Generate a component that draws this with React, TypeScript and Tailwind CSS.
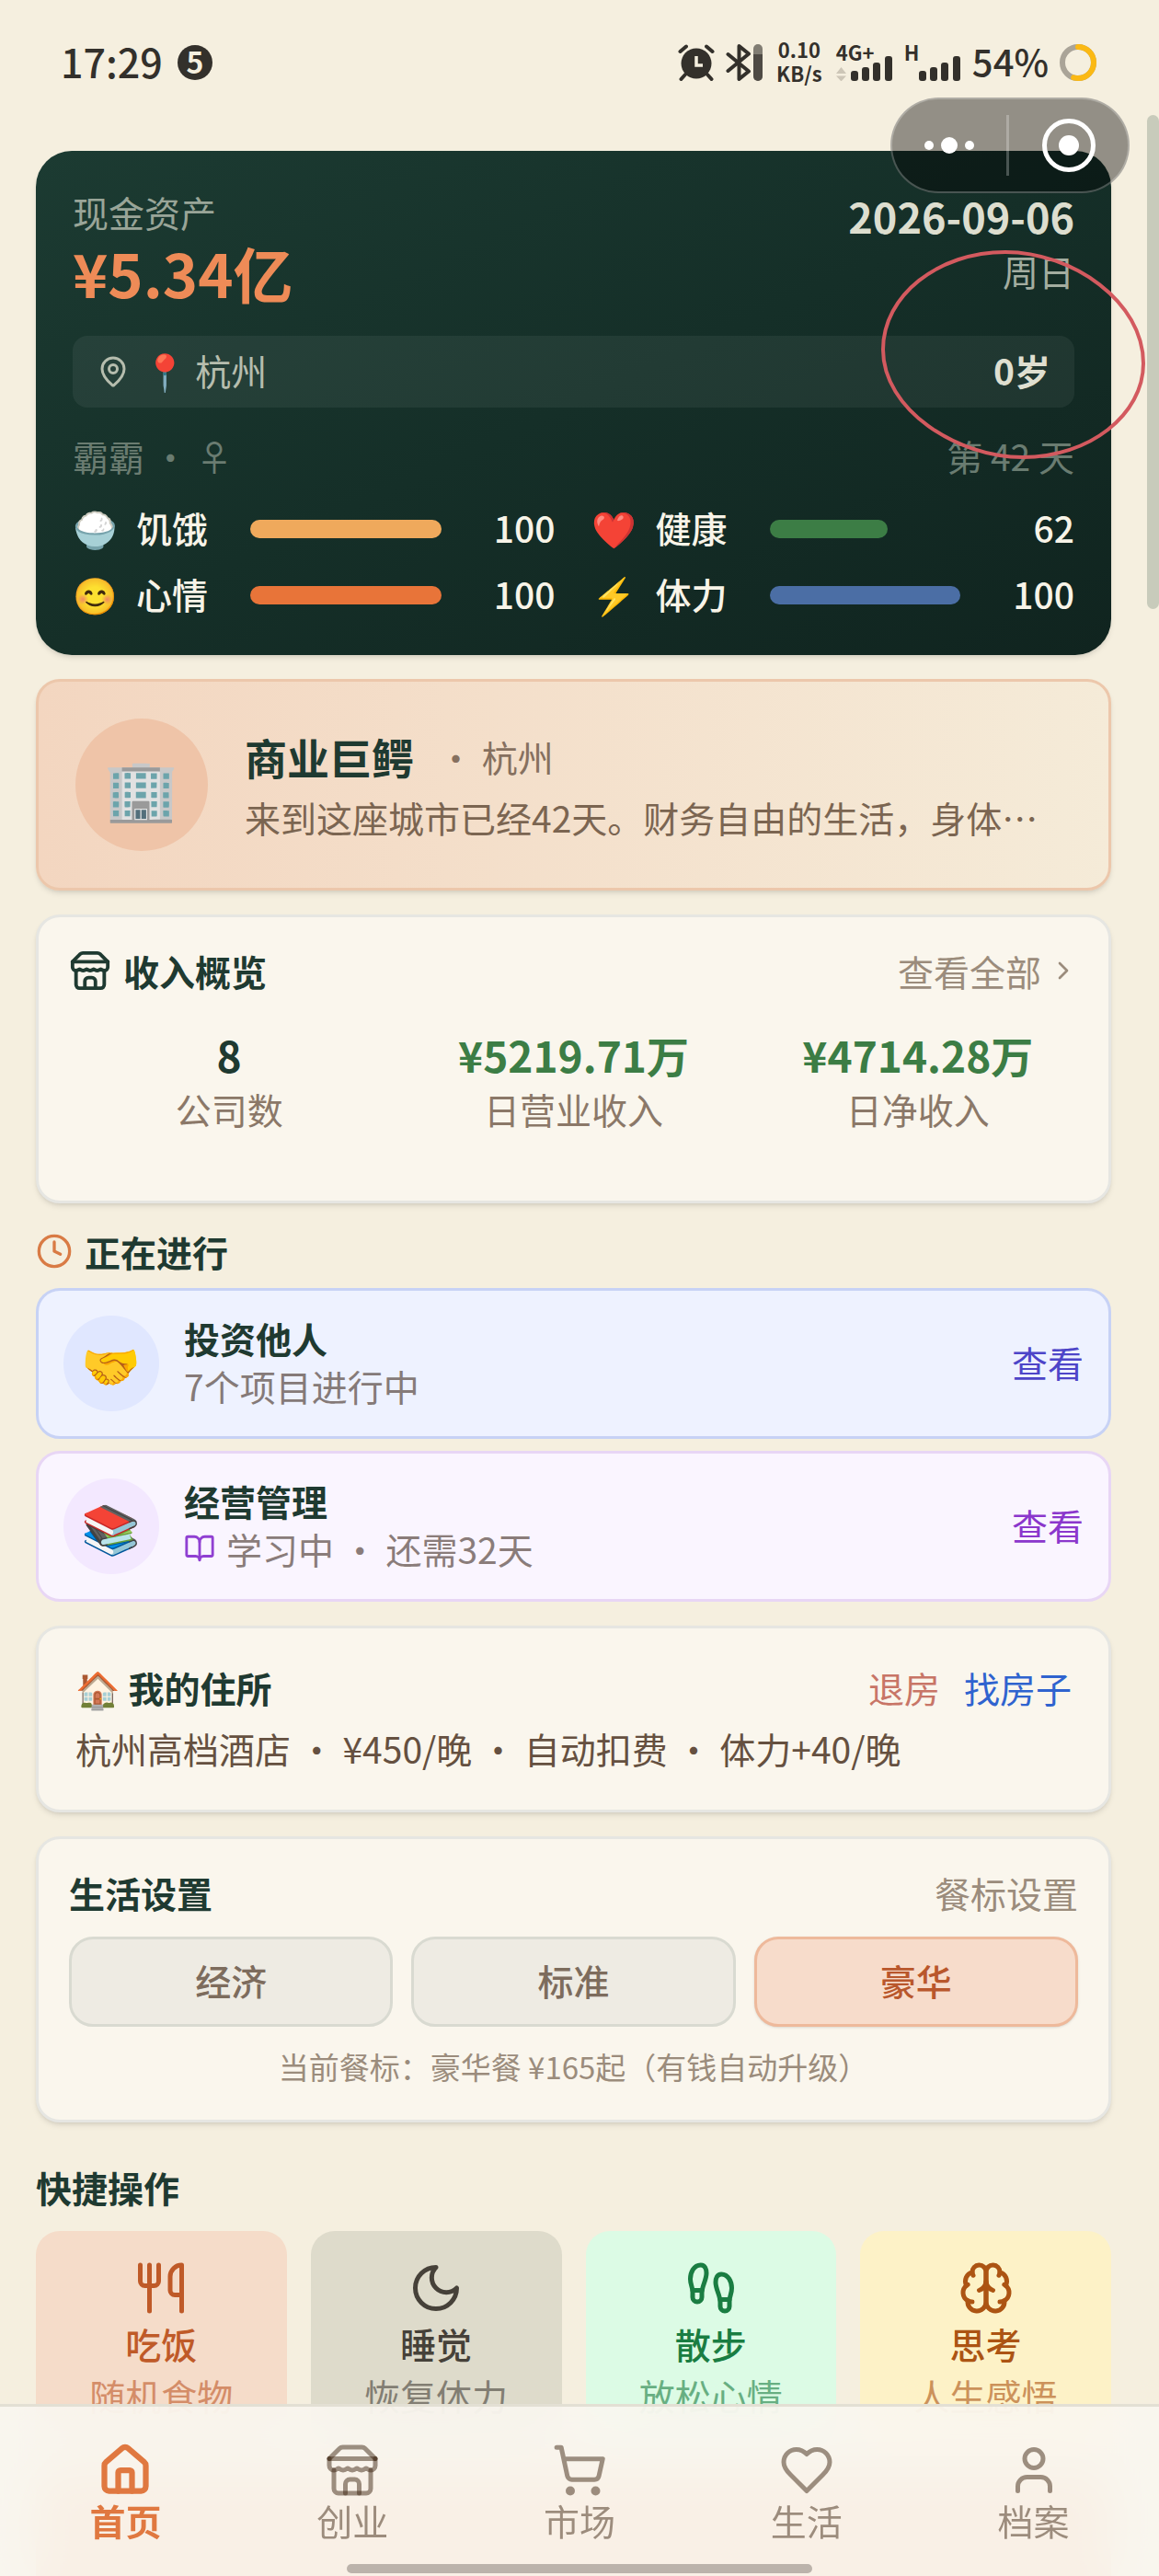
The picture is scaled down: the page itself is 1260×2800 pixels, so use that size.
import React from 'react';
import {
  BookOpen,
  ChevronRight,
  Clock,
  Footprints,
  House,
  MapPin,
  ShoppingCart,
  User,
  Utensils,
} from 'lucide-react';

type IconProps = { className?: string };

function StrokeIcon({ className, children }: IconProps & { children: React.ReactNode }) {
  return (
    <svg
      viewBox="0 0 24 24"
      fill="none"
      stroke="currentColor"
      strokeWidth="2"
      strokeLinecap="round"
      strokeLinejoin="round"
      aria-hidden="true"
      className={className}
    >
      {children}
    </svg>
  );
}

function StoreIcon({ className }: IconProps) {
  return (
    <StrokeIcon className={className}>
      <path d="m2 7 4.41-4.41A2 2 0 0 1 7.83 2h8.34a2 2 0 0 1 1.42.59L22 7" />
      <path d="M4 12v8a2 2 0 0 0 2 2h12a2 2 0 0 0 2-2v-8" />
      <path d="M15 22v-4a2 2 0 0 0-2-2h-2a2 2 0 0 0-2 2v4" />
      <path d="M2 7h20" />
      <path d="M22 7v3a2 2 0 0 1-2 2a2.7 2.7 0 0 1-1.59-.63.7.7 0 0 0-.82 0A2.7 2.7 0 0 1 16 12a2.7 2.7 0 0 1-1.59-.63.7.7 0 0 0-.82 0A2.7 2.7 0 0 1 12 12a2.7 2.7 0 0 1-1.59-.63.7.7 0 0 0-.82 0A2.7 2.7 0 0 1 8 12a2.7 2.7 0 0 1-1.59-.63.7.7 0 0 0-.82 0A2.7 2.7 0 0 1 4 12a2 2 0 0 1-2-2V7" />
    </StrokeIcon>
  );
}

function MoonIcon({ className }: IconProps) {
  return (
    <StrokeIcon className={className}>
      <path d="M12 3a6 6 0 0 0 9 9 9 9 0 1 1-9-9Z" />
    </StrokeIcon>
  );
}

function BrainIcon({ className }: IconProps) {
  return (
    <StrokeIcon className={className}>
      <path d="M12 5a3 3 0 1 0-5.997.125 4 4 0 0 0-2.526 5.77 4 4 0 0 0 .556 6.588A4 4 0 1 0 12 18Z" />
      <path d="M12 5a3 3 0 1 1 5.997.125 4 4 0 0 1 2.526 5.77 4 4 0 0 1-.556 6.588A4 4 0 1 1 12 18Z" />
      <path d="M15 13a4.5 4.5 0 0 1-3-4 4.5 4.5 0 0 1-3 4" />
      <path d="M17.599 6.5a3 3 0 0 0 .399-1.375" />
      <path d="M6.003 5.125A3 3 0 0 0 6.401 6.5" />
      <path d="M3.477 10.896a4 4 0 0 1 .585-.396" />
      <path d="M19.938 10.5a4 4 0 0 1 .585.396" />
      <path d="M6 18a4 4 0 0 1-1.967-.516" />
      <path d="M19.967 17.484A4 4 0 0 1 18 18" />
    </StrokeIcon>
  );
}

function HeartIcon({ className }: IconProps) {
  return (
    <StrokeIcon className={className}>
      <path d="M19 14c1.49-1.46 3-3.21 3-5.5A5.5 5.5 0 0 0 16.5 3c-1.76 0-3 .5-4.5 2-1.5-1.5-2.74-2-4.5-2A5.5 5.5 0 0 0 2 8.5c0 2.3 1.5 4.05 3 5.5l7 7Z" />
    </StrokeIcon>
  );
}

function AlarmIcon() {
  return (
    <svg viewBox="0 0 40 40" className="size-10" aria-hidden="true">
      <circle cx="20" cy="21" r="16.5" fill="currentColor" />
      <g stroke="currentColor" strokeWidth="4" strokeLinecap="round" fill="none">
        <path d="M2.5 8 9 2.5M37.5 8 31 2.5M8 33l-4.5 5M32 33l4.5 5" />
      </g>
      <path d="M20 13v10h7" stroke="#f5efdf" strokeWidth="3.5" fill="none" />
    </svg>
  );
}

function BluetoothIcon() {
  return (
    <svg viewBox="0 0 40 40" className="size-10" aria-hidden="true">
      <path
        d="M2.5 11 25 29.5 14.5 38V2L25 10.5 2.5 29"
        fill="none"
        stroke="currentColor"
        strokeWidth="4"
        strokeLinecap="round"
        strokeLinejoin="round"
      />
      <rect x="30" y="0" width="10" height="40" rx="5" fill="currentColor" opacity="0.6" />
      <path d="M30 11h10v24a5 5 0 0 1-10 0Z" fill="currentColor" opacity="0.65" />
    </svg>
  );
}

function Signal({ label, arrows }: { label: string; arrows?: boolean }) {
  return (
    <div className="relative h-10 w-[62px]">
      <span className="absolute top-0 left-0 text-[22px] leading-4 font-bold">{label}</span>
      <svg viewBox="0 0 62 40" className="absolute inset-0 h-10 w-[62px]" aria-hidden="true">
        {arrows && <path d="M0 32h11l-5.5-7ZM0 34.5h11l-5.5 6Z" fill="#cdc6b7" />}
        <rect x="16" y="29" width="8" height="11" rx="3" fill="currentColor" />
        <rect x="28" y="25" width="8" height="15" rx="3" fill="currentColor" />
        <rect x="40" y="20" width="8" height="20" rx="3" fill="currentColor" />
        <rect x="53" y="13" width="8" height="27" rx="3" fill="currentColor" />
      </svg>
    </div>
  );
}

function StatusBar() {
  return (
    <header className="flex h-[136px] shrink-0 items-center justify-between pr-[68px] pl-[66px] text-[#33302b]">
      <div className="flex items-center gap-4">
        <span className="pb-1 text-[43px] leading-none font-medium">17:29</span>
        <span className="flex size-[38px] items-center justify-center rounded-full bg-[#33302b] pb-1 text-[32px] leading-none font-bold text-[#f5efdf]">
          5
        </span>
      </div>
      <div className="flex items-center gap-3">
        <AlarmIcon />
        <BluetoothIcon />
        <div className="w-14 pb-1 text-center text-[22px] leading-[26px] font-bold">
          <div>0.10</div>
          <div>KB/s</div>
        </div>
        <Signal label="4G+" arrows />
        <Signal label="H" />
        <span className="pb-1 text-[40px] leading-none font-medium">54%</span>
        <svg viewBox="0 0 40 40" className="size-10" aria-hidden="true">
          <circle cx="20" cy="20" r="17" fill="none" stroke="#aaa498" strokeWidth="6" />
          <circle
            cx="20"
            cy="20"
            r="17"
            fill="none"
            stroke="#fbb914"
            strokeWidth="6"
            strokeLinecap="round"
            strokeDasharray="58 107"
            transform="rotate(-90 20 20)"
          />
        </svg>
      </div>
    </header>
  );
}

// floating mini-program menu in the top right corner
function Capsule() {
  return (
    <div className="absolute top-[106px] right-8 z-20 flex h-[104px] w-[260px] items-center rounded-full border-2 border-white/25 bg-black/40">
      <button type="button" aria-label="更多" className="flex h-full w-31 items-center justify-center gap-2">
        <span className="size-[10px] rounded-full bg-white" />
        <span className="size-[18px] rounded-full bg-white" />
        <span className="size-[10px] rounded-full bg-white" />
      </button>
      <span className="h-[66px] w-[3px] bg-white/25" />
      <button type="button" aria-label="关闭" className="flex h-full flex-1 items-center justify-center">
        <span className="flex size-[58px] items-center justify-center rounded-full border-[5px] border-white">
          <span className="size-[22px] rounded-full bg-white" />
        </span>
      </button>
    </div>
  );
}

const stats = [
  { emoji: '🍚', label: '饥饿', value: 100, color: 'bg-[#efa95c]' },
  { emoji: '❤️', label: '健康', value: 62, color: 'bg-[#3c7d45]' },
  { emoji: '😊', label: '心情', value: 100, color: 'bg-[#e87439]' },
  { emoji: '⚡', label: '体力', value: 100, color: 'bg-[#4b6ea5]' },
];

function ProfileCard() {
  return (
    <section className="rounded-[39px] bg-linear-to-br from-[#1c3b32] via-[#152f28] to-[#10241f] px-10 pt-[38px] pb-10 shadow-md">
      <div className="flex justify-between">
        <div>
          <p className="leading-14 text-[#99a598]">现金资产</p>
          <p className="text-[65px] leading-19 font-bold text-[#ee8b57]">¥5.34亿</p>
        </div>
        <div className="text-right">
          <p className="text-[45px] leading-[66px] font-bold text-[#dddecf]">2026-09-06</p>
          <p className="leading-13 text-[#a3ada0]">周日</p>
        </div>
      </div>

      <div className="mt-[31px] flex h-[78px] items-center justify-between rounded-2xl bg-white/6 px-[26px] leading-13">
        <div className="flex items-center gap-3.5 text-[#b6bdae]">
          <MapPin className="size-9" />
          <span className="pb-1">📍 杭州</span>
        </div>
        <span className="pb-1 font-bold text-[#dfdfd0]">0岁</span>
      </div>

      <div className="mt-6 flex justify-between leading-14 text-[#6a7c71]">
        <span>霸霸 ・ ♀</span>
        <span>第 42 天</span>
      </div>

      <div className="mt-[27px] grid grid-cols-2 gap-x-10 gap-y-[22px]">
        {stats.map((stat) => (
          <div key={stat.label} className="flex h-[50px] items-center gap-5 leading-[46px] font-medium text-[#f8f4e8]">
            <span className="w-[49px] pb-1">{stat.emoji}</span>
            <span className="w-26 pb-1">{stat.label}</span>
            <div className="h-5 flex-1">
              <div className={`h-full rounded-full ${stat.color}`} style={{ width: `${stat.value}%` }} />
            </div>
            <span className="w-26 pb-1 text-right">{stat.value}</span>
          </div>
        ))}
      </div>
    </section>
  );
}

function IdentityCard() {
  return (
    <section className="mt-[26px] flex items-center gap-10 rounded-[26px] border-[3px] border-[#ecc7ab] bg-linear-to-r from-[#f3d6c0] to-[#f5ebd8] p-10 shadow-md">
      <div className="flex size-36 shrink-0 items-center justify-center rounded-full bg-[#efc4a8] text-[65px] leading-none">
        🏢
      </div>
      <div className="min-w-0 pt-1">
        <div className="flex items-center gap-[26px] leading-[66px]">
          <h2 className="text-[46px] font-bold text-[#1f3a31]">商业巨鳄</h2>
          <span className="text-[#86705f]">・ 杭州</span>
        </div>
        <p className="truncate leading-[66px] text-[#7b6551]">来到这座城市已经42天。财务自由的生活，身体…</p>
      </div>
    </section>
  );
}

const income = [
  { value: '8', label: '公司数', color: 'text-[#1f3a31]' },
  { value: '¥5219.71万', label: '日营业收入', color: 'text-[#3c7d45]' },
  { value: '¥4714.28万', label: '日净收入', color: 'text-[#3c7d45]' },
];

function IncomeCard() {
  return (
    <section className="mt-[26px] rounded-[26px] border-[3px] border-[#e6e6e2] bg-[#faf6ed] px-[33px] pt-[30px] pb-[72px] shadow-md">
      <div className="flex items-center justify-between leading-14">
        <h2 className="flex items-center gap-[13px] font-bold text-[#1f3a31]">
          <StoreIcon className="size-[46px]" />
          收入概览
        </h2>
        <a href="#income" className="flex items-center gap-2 text-[#9b8c7c]">
          查看全部
          <ChevronRight className="size-8" />
        </a>
      </div>
      <div className="mt-8 grid grid-cols-3 gap-[26px] text-center">
        {income.map((item) => (
          <div key={item.label}>
            <p className={`text-[46px] leading-[62px] font-bold ${item.color}`}>{item.value}</p>
            <p className="leading-14 text-[#8b7868]">{item.label}</p>
          </div>
        ))}
      </div>
    </section>
  );
}

function OngoingSection() {
  return (
    <section className="mt-6">
      <h2 className="flex items-center gap-[13px] leading-14 font-bold text-[#1f3a31]">
        <Clock className="size-10 text-[#d97b45]" />
        正在进行
      </h2>
      <div className="mt-3 flex items-center gap-[27px] rounded-[26px] border-[3px] border-[#c7d2f5] bg-indigo-50 p-[27px]">
        <div className="flex size-26 items-center justify-center rounded-full bg-indigo-100 text-[52px] leading-none">🤝</div>
        <div className="-mt-1 flex-1 leading-13">
          <h3 className="font-bold text-[#1f3a31]">投资他人</h3>
          <p className="text-[#857a78]">7个项目进行中</p>
        </div>
        <button type="button" className="pb-1 text-[#4d45c8]">查看</button>
      </div>
      <div className="mt-[13px] flex items-center gap-[27px] rounded-[26px] border-[3px] border-[#e8d6f5] bg-purple-50 p-[27px]">
        <div className="flex size-26 items-center justify-center rounded-full bg-purple-100 text-[52px] leading-none">📚</div>
        <div className="-mt-1 flex-1 leading-13">
          <h3 className="font-bold text-[#1f3a31]">经营管理</h3>
          <p className="flex items-center gap-3 text-[#8a7c7a]">
            <BookOpen className="size-[34px] text-[#9040d2]" />
            学习中 ・ 还需32天
          </p>
        </div>
        <button type="button" className="pb-1 text-[#8b37cc]">查看</button>
      </div>
    </section>
  );
}

function HomeCard() {
  return (
    <section className="mt-[26px] rounded-[26px] border-[3px] border-[#e6e6e2] bg-[#faf6ed] px-10 pt-[38px] pb-[41px] leading-13 shadow-md">
      <div className="flex items-center justify-between">
        <h2 className="font-bold text-[#1f3a31]">🏠 我的住所</h2>
        <div className="flex gap-[26px]">
          <button type="button" className="text-[#c87567]">退房</button>
          <button type="button" className="text-[#2f63cf]">找房子</button>
        </div>
      </div>
      <p className="mt-3.5 text-[#655040]">杭州高档酒店 ・ ¥450/晚 ・ 自动扣费 ・ 体力+40/晚</p>
    </section>
  );
}

const meals = ['经济', '标准', '豪华'];

function LifeCard() {
  const [meal, setMeal] = React.useState('豪华');

  return (
    <section className="mt-[26px] rounded-[26px] border-[3px] border-[#e6e6e2] bg-[#faf6ed] px-[33px] pt-[30px] pb-[33px] shadow-md">
      <div className="flex items-center justify-between leading-14">
        <h2 className="font-bold text-[#1f3a31]">生活设置</h2>
        <span className="text-[#9b8c7c]">餐标设置</span>
      </div>
      <div className="mt-5 grid grid-cols-3 gap-5">
        {meals.map((name) => (
          <button
            key={name}
            type="button"
            onClick={() => setMeal(name)}
            className={`h-[98px] rounded-[26px] border-[3px] pb-1 font-medium ${
              name === meal
                ? 'border-[#eeb99b] bg-[#f7dccb] text-[#b9572c] shadow-sm'
                : 'border-[#d9dad1] bg-[#eeebe3] text-[#7d6c5d]'
            }`}
          >
            {name}
          </button>
        ))}
      </div>
      <p className="mt-[18px] text-center text-[33px] leading-[50px] text-[#9b8c7c]">
        当前餐标：豪华餐 ¥165起（有钱自动升级）
      </p>
    </section>
  );
}

const actions = [
  { icon: Utensils, label: '吃饭', hint: '随机食物', color: 'bg-[#f5dcc9] text-[#bf5a28]' },
  { icon: MoonIcon, label: '睡觉', hint: '恢复体力', color: 'bg-[#dedbcb] text-[#464139]' },
  { icon: Footprints, label: '散步', hint: '放松心情', color: 'bg-[#dcfbe5] text-[#1a7d42]' },
  { icon: BrainIcon, label: '思考', hint: '人生感悟', color: 'bg-[#fdf2c7] text-[#ac5413]' },
];

function QuickActions() {
  return (
    <section className="mt-[42px]">
      <h2 className="leading-14 font-bold text-[#1f3a31]">快捷操作</h2>
      <div className="mt-5 grid grid-cols-4 gap-[26px]">
        {actions.map(({ icon: Icon, label, hint, color }) => (
          <button
            key={label}
            type="button"
            className={`flex flex-col items-center rounded-[26px] pt-8 pb-[30px] leading-13 ${color}`}
          >
            <Icon className="size-15" />
            <span className="mt-1 font-medium">{label}</span>
            <span className="mt-1 opacity-60">{hint}</span>
          </button>
        ))}
      </div>
      <div className="mt-7 h-60 rounded-[26px] bg-[#f0b78f]" />
    </section>
  );
}

const tabs = [
  { icon: House, label: '首页', href: '#home' },
  { icon: StoreIcon, label: '创业', href: '#business' },
  { icon: ShoppingCart, label: '市场', href: '#market' },
  { icon: HeartIcon, label: '生活', href: '#life' },
  { icon: User, label: '档案', href: '#profile' },
];

function TabBar() {
  return (
    <nav className="absolute inset-x-0 bottom-0 z-20 border-t-[3px] border-[#e3e0d4] bg-[#faf6ef]/90 px-[13px] pt-[39px] pb-[3px] backdrop-blur-xl">
      <div className="grid grid-cols-5">
        {tabs.map(({ icon: Icon, label, href }, i) => (
          <a
            key={label}
            href={href}
            className={`flex flex-col items-center leading-12 ${
              i === 0 ? 'font-bold text-[#e07840]' : 'text-[#3f2814]/50'
            }`}
          >
            <Icon className="size-15" strokeWidth={i === 0 ? 2.5 : 2} />
            {label}
          </a>
        ))}
      </div>
      <div className="mx-auto mt-6 h-2.5 w-[41%] rounded-full bg-[#bcb3ab]" />
    </nav>
  );
}

export default function App() {
  return (
    <div
      lang="zh-CN"
      className="relative flex h-screen flex-col overflow-hidden bg-[#f5efdf] font-['Noto_Sans_CJK_SC','Noto_Color_Emoji',sans-serif] text-[39px]"
    >
      <StatusBar />
      <Capsule />

      <main className="flex-1 overflow-y-auto pt-7 pr-[52px] pb-52 pl-[39px] [scrollbar-width:none]">
        <ProfileCard />
        <IdentityCard />
        <IncomeCard />
        <OngoingSection />
        <HomeCard />
        <LifeCard />
        <QuickActions />
      </main>

      <div className="absolute top-[125px] right-0 z-10 h-[537px] w-[13px] rounded-full bg-[#c8cbbb]" />

      {/* hand-drawn mark around the age */}
      <svg
        viewBox="0 0 290 230"
        className="pointer-events-none absolute top-[270px] right-3.5 z-10 h-[230px] w-[290px]"
        aria-hidden="true"
      >
        <path
          d="M4 110C4 51 64 4 137 4S287 58 287 125C287 181 228 227 156 227S4 175 4 110Z"
          fill="none"
          stroke="#d35a5f"
          strokeWidth="4"
        />
      </svg>

      <TabBar />
    </div>
  );
}
